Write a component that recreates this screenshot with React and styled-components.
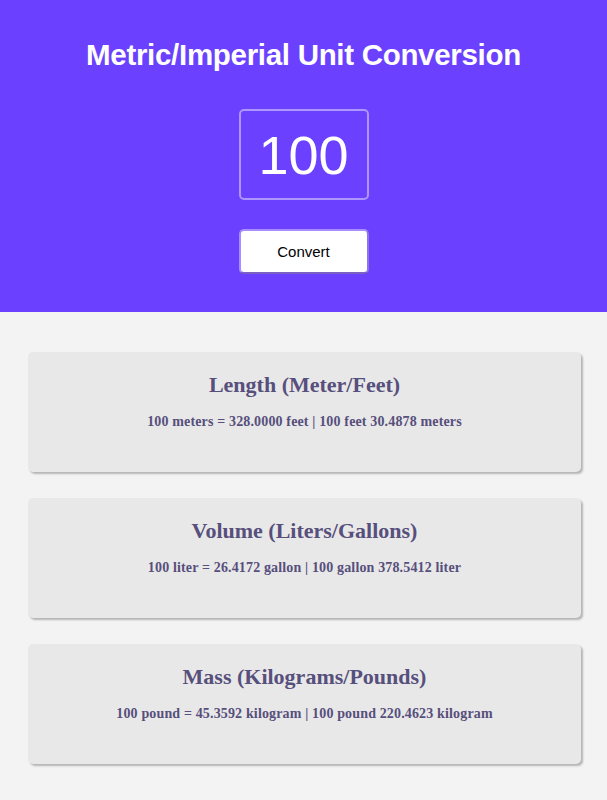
import React, { useState } from "react";
import styled, { createGlobalStyle } from "styled-components";

const GlobalStyle = createGlobalStyle`
	body {
		margin: 0;
		background: #f3f3f3;
		font-family: "Liberation Sans", Arial, sans-serif;
	}
`;

const Header = styled.header`
	background: #6b41ff;
	height: 312px;
	box-sizing: border-box;
	padding-top: 36px;
	display: flex;
	flex-direction: column;
	align-items: center;
`;

const Title = styled.h1`
	margin: 0;
	color: #ffffff;
	font-size: 29.5px;
	font-weight: 700;
	line-height: 38px;
	letter-spacing: -0.3px;
`;

const NumberInput = styled.input`
	margin-top: 35px;
	width: 130px;
	height: 91px;
	box-sizing: border-box;
	background: transparent;
	border: 2px solid rgba(255, 255, 255, 0.45);
	border-radius: 5px;
	color: #ffffff;
	font-family: "Liberation Sans", Arial, sans-serif;
	font-size: 54px;
	text-align: center;
	outline: none;
	padding: 0;
`;

const ConvertButton = styled.button`
	margin-top: 29px;
	width: 130px;
	height: 45px;
	box-sizing: border-box;
	background: #ffffff;
	border: 2px solid;
	border-color: #a88dff #8e74e6 #7a62c4 #a88dff;
	border-radius: 5px;
	font-family: "Liberation Sans", Arial, sans-serif;
	font-size: 15px;
	color: #000000;
	cursor: pointer;
`;

const Results = styled.main`
	padding: 40px 26px 40px 28px;
	display: flex;
	flex-direction: column;
	gap: 26px;
`;

const Card = styled.section`
	background: #e8e8e8;
	border-radius: 5px;
	box-shadow: 2px 2px 2px #b5b5b5;
	height: 120px;
	box-sizing: border-box;
	padding-top: 20px;
	text-align: center;
	color: #574f7c;
	font-family: "Liberation Serif", "Times New Roman", serif;
`;

const CardTitle = styled.h2`
	margin: 0;
	font-size: 22px;
	line-height: 26px;
	font-weight: 700;
`;

const CardText = styled.p`
	margin: 16px 0 0;
	font-size: 14px;
	line-height: 16px;
	font-weight: 700;
	letter-spacing: 0.15px;
`;

export default function App() {
	const [value, setValue] = useState("100");
	const n = 100;

	const cards = [
		{
			title: "Length (Meter/Feet)",
			text: `${n} meters = ${(n * 3.28).toFixed(4)} feet | ${n} feet ${(n / 3.28).toFixed(4)} meters`,
		},
		{
			title: "Volume (Liters/Gallons)",
			text: `${n} liter = ${(n * 0.264172).toFixed(4)} gallon | ${n} gallon ${(n * 3.785412).toFixed(4)} liter`,
		},
		{
			title: "Mass (Kilograms/Pounds)",
			text: `${n} pound = ${(n * 0.453592).toFixed(4)} kilogram | ${n} pound ${(n * 2.204623).toFixed(4)} kilogram`,
		},
	];

	return (
		<>
			<GlobalStyle />
			<Header>
				<Title>Metric/Imperial Unit Conversion</Title>
				<NumberInput value={value} onChange={(e) => setValue(e.target.value)} />
				<ConvertButton>Convert</ConvertButton>
			</Header>
			<Results>
				{cards.map((c) => (
					<Card key={c.title}>
						<CardTitle>{c.title}</CardTitle>
						<CardText>{c.text}</CardText>
					</Card>
				))}
			</Results>
		</>
	);
}
